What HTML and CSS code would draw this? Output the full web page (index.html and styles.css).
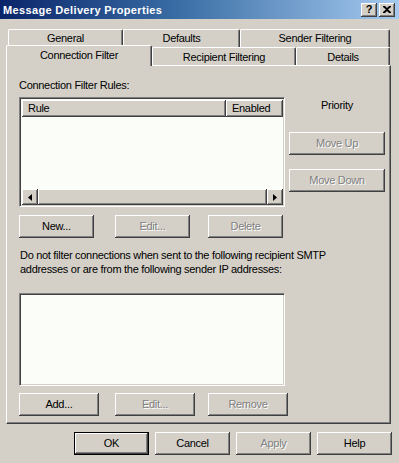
FILE: index.html
```html
<!DOCTYPE html>
<html>
<head>
<meta charset="utf-8">
<link rel="stylesheet" href="styles.css">
</head>
<body>
<div class="window">
  <div class="titlebar">
    <span class="title">Message Delivery Properties</span>
    <div class="tb-btns">
      <span class="tb-btn help">?</span>
      <span class="tb-btn close"><svg width="8" height="7" viewBox="0 0 8 7"><path d="M0 0h2l2 2 2-2h2v1L5 3.5 8 6v1H6L4 5 2 7H0V6l3-2.5L0 1z" fill="#000"/></svg></span>
    </div>
  </div>

  <div class="tabs">
    <div class="tabrow back">
      <div class="tab t-general">General</div>
      <div class="tab t-defaults">Defaults</div>
      <div class="tab t-sender">Sender Filtering</div>
    </div>
    <div class="tabrow front">
      <div class="tab selected t-conn">Connection Filter</div>
      <div class="tab t-recip">Recipient Filtering</div>
      <div class="tab t-details">Details</div>
    </div>
  </div>

  <div class="panel">
    <div class="label">Connection Filter Rules:</div>
    <div class="upper">
      <div class="listview">
        <div class="lv-header">
          <div class="lv-col col-rule">Rule</div>
          <div class="lv-col col-enabled">Enabled</div>
        </div>
        <div class="lv-body"></div>
        <div class="hscroll">
          <div class="sb-btn"><svg width="4" height="7" viewBox="0 0 4 7"><path d="M4 0v7L0 3.5z" fill="#000"/></svg></div>
          <div class="sb-thumb"></div>
          <div class="sb-btn"><svg width="4" height="7" viewBox="0 0 4 7"><path d="M0 0v7l4-3.5z" fill="#000"/></svg></div>
        </div>
      </div>
      <div class="side">
        <div class="priority">Priority</div>
        <button class="btn disabled wide">Move Up</button>
        <button class="btn disabled wide">Move Down</button>
      </div>
    </div>
    <div class="btnrow row1">
      <button class="btn">New...</button>
      <button class="btn disabled b-edit1">Edit...</button>
      <button class="btn disabled b-del">Delete</button>
    </div>
    <p class="desc">Do not filter connections when sent to the following recipient SMTP<br>addresses or are from the following sender IP addresses:</p>
    <div class="listbox"></div>
    <div class="btnrow row2">
      <button class="btn w80">Add...</button>
      <button class="btn disabled w80 b-edit2">Edit...</button>
      <button class="btn disabled w80 b-rem">Remove</button>
    </div>
  </div>

  <div class="footer">
    <button class="btn default">OK</button>
    <button class="btn">Cancel</button>
    <button class="btn disabled">Apply</button>
    <button class="btn">Help</button>
  </div>
</div>
</body>
</html>
```

FILE: styles.css
```css
* { box-sizing: border-box; }
html, body {
  margin: 0;
  padding: 0;
  background: #d4d0c8;
}
body {
  width: 399px;
  height: 463px;
  overflow: hidden;
  font: 11px "Liberation Sans", Arial, sans-serif;
  letter-spacing: -0.3px;
  color: #000;
}
.window {
  display: flex;
  flex-direction: column;
}

/* title bar */
.titlebar {
  height: 19px;
  display: flex;
  align-items: center;
  justify-content: space-between;
  padding: 0 4px 0 3px;
  background: linear-gradient(to right, #0a246a 0%, #3a6ea5 45%, #a6caf0 100%);
}
.title {
  color: #fff;
  font-weight: bold;
  font-size: 11px;
  letter-spacing: 0.35px;
}
.tb-btns {
  display: flex;
  gap: 2px;
}
.tb-btn {
  width: 16px;
  height: 14px;
  background: #d4d0c8;
  box-shadow: inset -1px -1px #404040, inset 1px 1px #fff, inset -2px -2px #808080;
  display: flex;
  align-items: center;
  justify-content: center;
  font-weight: bold;
  font-size: 11px;
  letter-spacing: 0;
  line-height: 1;
  padding-bottom: 1px;
}

/* tabs */
.tabs {
  margin-top: 10px;
  display: flex;
  flex-direction: column;
}
.tabrow {
  display: flex;
  height: 18px;
}
.tabrow.back {
  padding-left: 8px;
}
.tabrow.front {
  align-items: flex-end;
  padding-left: 6px;
}
.tab {
  height: 18px;
  border-top: 1px solid #fff;
  border-left: 1px solid #fff;
  border-right: 1px solid #404040;
  box-shadow: inset -1px 0 #808080;
  border-radius: 2px 2px 0 0;
  display: flex;
  align-items: center;
  justify-content: center;
  padding-bottom: 1px;
  background: #d4d0c8;
}
.t-general { width: 115px; }
.t-defaults { width: 117px; }
.t-sender { width: 150px; }
.t-conn { width: 146px; }
.t-recip { width: 144px; padding-top: 2px; }
.t-details { width: 94px; padding-top: 2px; }
.tab.selected {
  height: 21px;
  margin-bottom: -1px;
  position: relative;
  z-index: 1;
  padding-bottom: 3px;
}

/* panel */
.panel {
  margin-left: 6px;
  width: 385px;
  height: 359px;
  border-top: 1px solid #fff;
  border-left: 1px solid #fff;
  border-right: 1px solid #404040;
  border-bottom: 1px solid #404040;
  box-shadow: inset -1px -1px #808080;
  padding: 13px 0 0 12px;
  display: flex;
  flex-direction: column;
}
.label {
  height: 13px;
  line-height: 13px;
}
.upper {
  margin-top: 5px;
  display: flex;
  gap: 4px;
}
.listview {
  width: 266px;
  height: 110px;
  background: #fbfdf9;
  border-top: 1px solid #808080;
  border-left: 1px solid #808080;
  border-right: 1px solid #fff;
  border-bottom: 1px solid #fff;
  box-shadow: inset 1px 1px #404040, inset -1px -1px #d4d0c8;
  padding: 2px 1px 1px 2px;
  display: flex;
  flex-direction: column;
}
.lv-header {
  display: flex;
  height: 17px;
}
.lv-col {
  background: #d4d0c8;
  box-shadow: inset -1px -1px #404040, inset 1px 1px #fff, inset -2px -2px #808080;
  display: flex;
  align-items: center;
  padding-left: 6px;
  padding-bottom: 1px;
}
.col-rule { width: 204px; }
.col-enabled { flex: 1; }
.lv-body { flex: 1; }
.hscroll {
  height: 16px;
  display: flex;
  background: #e8e6e1;
}
.sb-btn {
  width: 16px;
  height: 16px;
  background: #d4d0c8;
  box-shadow: inset -1px -1px #404040, inset 1px 1px #fff, inset -2px -2px #808080;
  display: flex;
  align-items: center;
  justify-content: center;
}
.sb-thumb {
  flex: 1;
  background: #d4d0c8;
  box-shadow: inset -1px -1px #404040, inset 1px 1px #fff, inset -2px -2px #808080;
}
.side {
  width: 96px;
  display: flex;
  flex-direction: column;
  align-items: center;
}
.priority {
  height: 14px;
  line-height: 14px;
  padding-top: 1px;
  margin-bottom: 20px;
  box-sizing: content-box;
}
.btn.wide {
  width: 96px;
  margin-bottom: 14px;
}

/* buttons */
.btn {
  width: 75px;
  height: 23px;
  margin: 0;
  padding: 0 0 1px 0;
  border: none;
  border-radius: 0;
  background: #d4d0c8;
  box-shadow: inset -1px -1px #404040, inset 1px 1px #fff, inset -2px -2px #808080;
  font: 11px "Liberation Sans", Arial, sans-serif;
  letter-spacing: -0.3px;
  color: #000;
  display: flex;
  align-items: center;
  justify-content: center;
  -webkit-appearance: none;
  appearance: none;
}
.btn.disabled {
  color: #808080;
  text-shadow: 1px 1px #fff;
}
.btn.default {
  box-shadow: inset 0 0 0 1px #000, inset -2px -2px #404040, inset 2px 2px #fff, inset -3px -3px #808080;
}
.btnrow {
  display: flex;
}
.row1 {
  margin-top: 8px;
}
.b-edit1 { margin-left: 21px; }
.b-del { margin-left: 18px; }
.w80 { width: 80px; }
.b-edit2 { margin-left: 16px; }
.b-rem { margin-left: 13px; }
.desc {
  margin: 10px 0 0 1px;
  line-height: 14px;
  white-space: nowrap;
}
.listbox {
  margin-top: 17px;
  width: 266px;
  height: 93px;
  background: #fbfdf9;
  border-top: 1px solid #808080;
  border-left: 1px solid #808080;
  border-right: 1px solid #fff;
  border-bottom: 1px solid #fff;
  box-shadow: inset 1px 1px #404040, inset -1px -1px #d4d0c8;
}
.row2 {
  margin-top: 7px;
}

/* footer */
.footer {
  display: flex;
  gap: 6px;
  margin-top: 8px;
  padding-left: 74px;
}
```
